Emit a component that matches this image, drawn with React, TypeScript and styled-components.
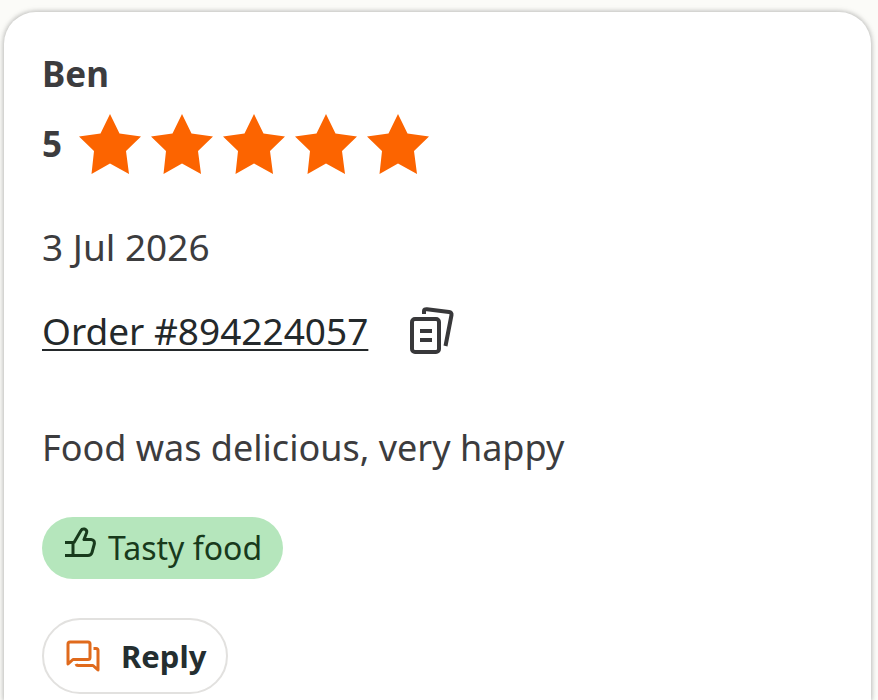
import React from "react";
import styled, { createGlobalStyle } from "styled-components";

const GlobalStyle = createGlobalStyle`
  *, *::before, *::after { box-sizing: border-box; }
  body {
    margin: 0;
    background: #fbfbf8;
    color: #3c3c3e;
    font-family: "Noto Sans", sans-serif;
    font-size: 36px;
    line-height: 44px;
  }
`;

const Page = styled.main`
  min-height: 100vh;
  padding: 12px 7px 0 4px;
  display: flex;
  overflow: hidden;
`;

const Card = styled.article`
  flex: 1;
  min-width: 0;
  padding: 40px 38px 5px;
  display: flex;
  flex-direction: column;
  align-items: flex-start;
  background: #fff;
  border-radius: 32px 32px 0 0;
  box-shadow: 0 0 4px 1px rgba(0, 0, 0, 0.22), 0 0 10px rgba(0, 0, 0, 0.06);
`;

const Reviewer = styled.h2`
  margin: 0;
  font-size: 35px;
  font-weight: 700;
`;

const Rating = styled.div`
  margin-top: 18px;
  display: flex;
  align-items: center;
  gap: 17px;
`;

const Score = styled.span`
  font-size: 35px;
  font-weight: 700;
`;

const Stars = styled.div`
  display: flex;
  gap: 10px;
`;

const StarIcon = styled.svg`
  display: block;
  width: 62px;
  height: 60px;
  fill: #fc6400;
`;

const ReviewDate = styled.time`
  margin-top: 51px;
  font-size: 37px;
`;

const OrderRow = styled.div`
  margin-top: 38px;
  display: flex;
  align-items: center;
  gap: 42px;
`;

const OrderLink = styled.a`
  color: #24292b;
  font-size: 37px;
  text-decoration: underline;
  text-decoration-thickness: 2px;
  text-underline-offset: 4px;
  text-decoration-skip-ink: none;
`;

const CopyButton = styled.button`
  padding: 0;
  border: 0;
  background: none;
  color: #38383a;
  cursor: pointer;
`;

const LineIcon = styled.svg<{ $width: number; $height: number }>`
  display: block;
  flex: none;
  width: ${(p) => p.$width}px;
  height: ${(p) => p.$height}px;
  fill: none;
  stroke: currentColor;
  stroke-linejoin: round;
`;

const Comment = styled.p`
  margin: 71px 0 0;
`;

const Tag = styled.span`
  margin-top: 47px;
  height: 62px;
  padding: 0 21px 0 23px;
  display: flex;
  align-items: center;
  gap: 12px;
  border-radius: 31px;
  background: #b5e6bc;
  color: #183a1c;
  font-size: 32px;

  svg {
    margin-bottom: 12px;
  }
`;

const ReplyButton = styled.button`
  margin-top: 39px;
  height: 76px;
  padding: 0 20px 0 22px;
  display: flex;
  align-items: center;
  gap: 21px;
  border: 2px solid #e2e1df;
  border-radius: 38px;
  background: #fff;
  color: #242e30;
  font: 700 31px/40px "Noto Sans", sans-serif;
  cursor: pointer;

  svg {
    color: #e06a1c;
  }
`;

const rating = 5;

const Star = () => (
  <StarIcon viewBox="0 0 62 60" aria-hidden="true">
    <path d="M31 0 40.500 19.500 62 22.500 47 37 50 60 31 49.500 12.500 60 15 37 0 22.500 21.500 19.500Z" />
  </StarIcon>
);

const CopyIcon = () => (
  <LineIcon $width={44} $height={48} viewBox="0 0 44 48" strokeWidth="4" aria-hidden="true">
    <rect x="2" y="12" width="27" height="33" rx="3" />
    <path d="M10 24h12M10 33h12" />
    <path d="M14 7V4Q14 2 17 2.300L39 5Q42 5.500 41.500 8L35.500 39" />
  </LineIcon>
);

const ThumbIcon = () => (
  <LineIcon $width={31} $height={31} viewBox="0 0 31 31" strokeWidth="3" aria-hidden="true">
    <path d="M0 15.500H9L16 3.500Q17 1.500 19.500 2Q22.500 3 21.500 6L19 12.500H26Q30 13 29.300 17L27 25.500Q26 28.500 23 28.500H0M8 15.500V28.500" />
  </LineIcon>
);

const ChatIcon = () => (
  <LineIcon $width={34} $height={32} viewBox="0 0 34 32" strokeWidth="3" aria-hidden="true">
    <path d="M2 24V4Q2 2 4 2H22Q24 2 24 4V17.500Q24 19.500 22 19.500H7Z" />
    <path d="M27.500 8.500H30Q32 8.500 32 10.500V30L27 25.500H12Q10.500 25.500 10 24" />
  </LineIcon>
);

export default function App() {
  return (
    <>
      <GlobalStyle />
      <Page>
        <Card>
          <Reviewer>Ben</Reviewer>
          <Rating>
            <Score>{rating}</Score>
            <Stars role="img" aria-label={`${rating} stars`}>
              {Array.from({ length: rating }, (_, i) => (
                <Star key={i} />
              ))}
            </Stars>
          </Rating>
          <ReviewDate dateTime="2026-07-03">3 Jul 2026</ReviewDate>
          <OrderRow>
            <OrderLink href="#order-894224057">Order #894224057</OrderLink>
            <CopyButton type="button" aria-label="Copy order number">
              <CopyIcon />
            </CopyButton>
          </OrderRow>
          <Comment>Food was delicious, very happy</Comment>
          <Tag>
            <ThumbIcon />
            Tasty food
          </Tag>
          <ReplyButton type="button">
            <ChatIcon />
            Reply
          </ReplyButton>
        </Card>
      </Page>
    </>
  );
}
